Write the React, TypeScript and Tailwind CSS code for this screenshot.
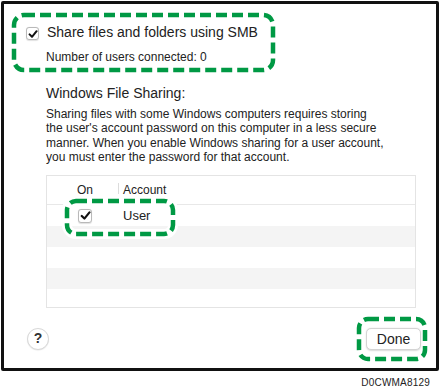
const font = { fontFamily: '"Liberation Sans", Arial, sans-serif' };

const Check = ({ size }: { size: number }) => (
  <span
    className="flex shrink-0 items-center justify-center rounded-[3px] border border-[#b9b9b9] bg-white shadow-[0_0.5px_1px_rgba(0,0,0,0.12)]"
    style={{ width: size, height: size }}
  >
    <svg width={size - 3} height={size - 3} viewBox="0 0 10 10">
      <path d="M1.6 5.4 L4 7.8 L8.6 2.2" fill="none" stroke="#111" strokeWidth="2" strokeLinecap="round" strokeLinejoin="round" />
    </svg>
  </span>
);

const rows = [0, 1, 2, 3, 4];

export default function App() {
  return (
    <div className="relative h-[390px] w-[440px] overflow-hidden bg-white text-[#222]" style={font}>
      <div className="ml-[1px] mt-[1px] flex h-[370px] w-[438px] flex-col rounded-[2px] border-[3px] border-[#111] bg-white">
        <div className="flex items-start gap-[8px] pl-[22px] pt-[20px] text-[14px] leading-[17px]">
          <span className="mt-[3px]">
            <Check size={13} />
          </span>
          <span>Share files and folders using SMB</span>
        </div>
        <div className="mt-[9px] pl-[42px] text-[12px] leading-[15px]">Number of users connected: 0</div>

        <div className="mt-[20px] pl-[42px] text-[14px] leading-[17px]">Windows File Sharing:</div>
        <div className="mt-[5px] whitespace-nowrap pl-[42px] text-[12px] leading-[14.33px]">
          <div>Sharing files with some Windows computers requires storing</div>
          <div>the user's account password on this computer in a less secure</div>
          <div>manner. When you enable Windows sharing for a user account,</div>
          <div>you must enter the password for that account.</div>
        </div>

        <div className="ml-[42px] mt-[11px] flex h-[133px] w-[370px] flex-col overflow-hidden border border-[#e4e4e4]">
          <div className="flex h-[29px] shrink-0 items-start border-b border-[#e8e8e8] pt-[7px] text-[12px] leading-[15px]">
            <div className="w-[71px] pl-[30px]">On</div>
            <div className="h-[11px] w-px bg-[#dcdcdc]" />
            <div className="pl-[4px]">Account</div>
          </div>
          {rows.map((r) => (
            <div
              key={r}
              className={`flex h-[21px] shrink-0 items-center text-[13px] leading-[21px] ${r % 2 === 1 ? "bg-[#f4f4f4]" : "bg-white"}`}
            >
              {r === 0 && (
                <>
                  <div className="w-[72px] pl-[31px]">
                    <Check size={14} />
                  </div>
                  <div className="pl-[4px]">User</div>
                </>
              )}
            </div>
          ))}
        </div>

        <div className="mt-[19px] flex items-center justify-between pl-[23px] pr-[15px]">
          <button className="flex h-[22px] w-[22px] items-center justify-center rounded-full border border-[#d8d8d8] bg-white text-[14px] font-bold text-[#333] shadow-[0_0.5px_1px_rgba(0,0,0,0.1)]">
            ?
          </button>
          <button className="mt-[1px] flex h-[22px] w-[55px] items-center justify-center rounded-[5px] border border-[#d4d4d4] bg-white text-[14px] text-[#222] shadow-[0_0.5px_1.5px_rgba(0,0,0,0.15)]">
            Done
          </button>
        </div>
      </div>

      <div className="mt-[6px] pr-[10px] text-right text-[10px] leading-[12px] tracking-[0.2px] text-[#222]">D0CWMA8129</div>

      <svg className="pointer-events-none absolute left-0 top-0" width="440" height="390">
        <rect x="14" y="15" width="259" height="55" rx="10" fill="none" stroke="#009944" strokeWidth="4.5" strokeDasharray="11 5" />
        <rect x="67" y="201" width="106" height="33" rx="9" fill="none" stroke="#fff" strokeWidth="10" />
        <rect x="67" y="201" width="106" height="33" rx="9" fill="none" stroke="#009944" strokeWidth="4.5" strokeDasharray="11 5" />
        <rect x="359" y="319" width="66" height="40" rx="9" fill="none" stroke="#009944" strokeWidth="4.5" strokeDasharray="11 5" />
      </svg>
    </div>
  );
}
